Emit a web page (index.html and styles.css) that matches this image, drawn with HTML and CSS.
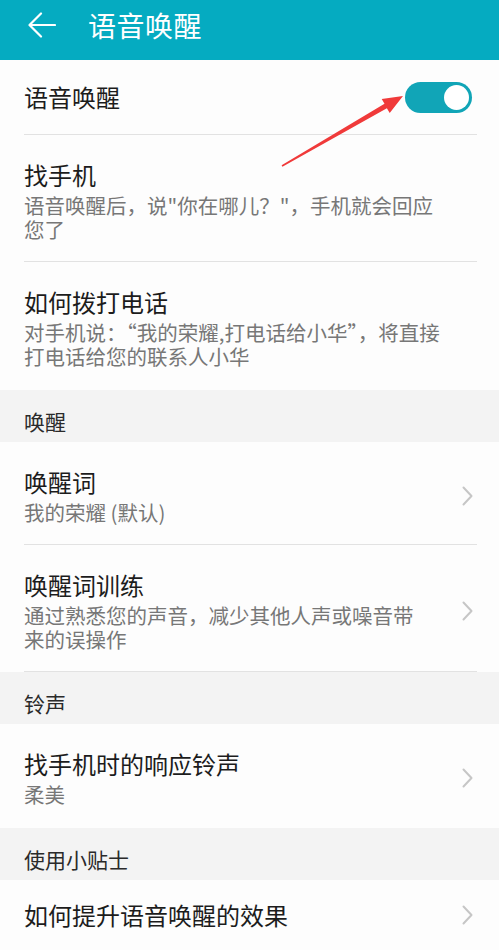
FILE: index.html
```html
<!DOCTYPE html>
<html>
<head>
    <meta charset="utf-8">
    <title>语音唤醒</title>
    <link rel="stylesheet" href="styles.css">
</head>
<body>
    <header class="appbar">
        <svg class="back" width="28" height="26" viewBox="0 0 28 26">
            <path d="M27 13H2M13 1.5L1.5 13L13 24.5" fill="none" stroke="#fff" stroke-width="2.2" stroke-linecap="round" stroke-linejoin="round"/>
        </svg>
        <span class="appbar-title">语音唤醒</span>
    </header>

    <div class="list">
        <div class="item item-single">
            <div class="item-text">
                <div class="item-title">语音唤醒</div>
            </div>
            <div class="switch"><span class="knob"></span></div>
        </div>
        <div class="item">
            <div class="item-text">
                <div class="item-title">找手机</div>
                <div class="item-sub">语音唤醒后，说"你在哪儿？"，手机就会回应您了</div>
            </div>
        </div>
        <div class="item item-last">
            <div class="item-text">
                <div class="item-title">如何拨打电话</div>
                <div class="item-sub">对手机说：“我的荣耀,打电话给小华”，将直接打电话给您的联系人小华</div>
            </div>
        </div>

        <div class="section">唤醒</div>
        <div class="item">
            <div class="item-text narrow">
                <div class="item-title">唤醒词</div>
                <div class="item-sub">我的荣耀 (默认)</div>
            </div>
            <svg class="chevron" width="11" height="20" viewBox="0 0 11 20"><path d="M1.5 1.5L9.5 10L1.5 18.5" fill="none" stroke="#c6c6c6" stroke-width="2" stroke-linecap="round" stroke-linejoin="round"/></svg>
        </div>
        <div class="item">
            <div class="item-text narrow">
                <div class="item-title">唤醒词训练</div>
                <div class="item-sub">通过熟悉您的声音，减少其他人声或噪音带来的误操作</div>
            </div>
            <svg class="chevron" width="11" height="20" viewBox="0 0 11 20"><path d="M1.5 1.5L9.5 10L1.5 18.5" fill="none" stroke="#c6c6c6" stroke-width="2" stroke-linecap="round" stroke-linejoin="round"/></svg>
        </div>

        <div class="section">铃声</div>
        <div class="item item-last">
            <div class="item-text narrow">
                <div class="item-title">找手机时的响应铃声</div>
                <div class="item-sub">柔美</div>
            </div>
            <svg class="chevron" width="11" height="20" viewBox="0 0 11 20"><path d="M1.5 1.5L9.5 10L1.5 18.5" fill="none" stroke="#c6c6c6" stroke-width="2" stroke-linecap="round" stroke-linejoin="round"/></svg>
        </div>

        <div class="section">使用小贴士</div>
        <div class="item item-single item-last">
            <div class="item-text narrow">
                <div class="item-title">如何提升语音唤醒的效果</div>
            </div>
            <svg class="chevron" width="11" height="20" viewBox="0 0 11 20"><path d="M1.5 1.5L9.5 10L1.5 18.5" fill="none" stroke="#c6c6c6" stroke-width="2" stroke-linecap="round" stroke-linejoin="round"/></svg>
        </div>
    </div>

    <!-- red annotation arrow pointing at the switch -->
    <svg class="annotation" width="499" height="200" viewBox="0 0 499 200">
        <polygon points="281.6,165.3 384.5,103.8 381.7,99.1 403,96 389.7,112.9 386.9,108.2 282.4,166.7" fill="#f03a3a"/>
    </svg>
</body>
</html>
```

FILE: styles.css
```css
html, body {
    margin: 0;
    padding: 0;
}
body {
    position: relative;
    width: 499px;
    height: 950px;
    overflow: hidden;
    background: #fdfdfd;
    font-family: "Noto Sans CJK SC", "Noto Sans", sans-serif;
    color: #1c1c1c;
}
.appbar {
    height: 60px;
    box-sizing: border-box;
    padding: 0 0 10px 28px;
    display: flex;
    align-items: center;
    background: #05abc1;
    color: #fff;
}
.back {
    display: block;
    margin-right: 32px;
}
.appbar-title {
    font-size: 28px;
    line-height: 34px;
    letter-spacing: 0.5px;
}
.item {
    display: flex;
    align-items: center;
    margin: 0 22px 0 24px;
    padding: 25px 0 20px;
    border-bottom: 1px solid #e2e2e2;
}
.item-last {
    border-bottom: none;
    padding-bottom: 22px;
}
.item-single {
    height: 75px;
    box-sizing: border-box;
    padding: 0;
}
.item-single.item-last {
    height: 70px;
}
.item-text {
    flex: 1;
    max-width: 420px;
}
.item-text.narrow {
    max-width: 400px;
}
.item-title {
    font-size: 24px;
    line-height: 30px;
}
.item-sub {
    margin-top: 3px;
    font-size: 20.5px;
    line-height: 24px;
    color: #777;
}
.section {
    height: 52px;
    box-sizing: border-box;
    padding: 19px 24px 0;
    background: #f3f3f3;
    font-size: 21px;
    line-height: 24px;
    color: #2a2a2a;
}
.switch {
    width: 67px;
    height: 31px;
    margin-left: auto;
    margin-right: 5px;
    border-radius: 16px;
    background: #11a5b7;
    display: flex;
    align-items: center;
    justify-content: flex-end;
    padding-right: 3px;
    box-sizing: border-box;
}
.knob {
    width: 25px;
    height: 25px;
    border-radius: 50%;
    background: #fff;
}
.chevron {
    display: block;
    margin-left: auto;
    margin-right: 4px;
}
.annotation {
    position: absolute;
    left: 0;
    top: 0;
}
```
